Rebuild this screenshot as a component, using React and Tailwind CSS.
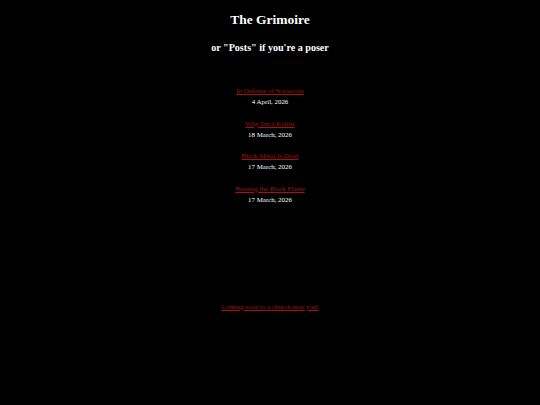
import React from 'react'

const posts = [
  { title: 'In Defense of Norsecore', date: '4 April, 2026' },
  { title: "Why I'm a Kvltist", date: '18 March, 2026' },
  { title: 'Black Metal Is Dead', date: '17 March, 2026' },
  { title: 'Burning the Black Flame', date: '17 March, 2026' },
]

export default function App() {
  return (
    <div
      className="min-h-[405px] w-full bg-black text-white text-center"
      style={{ fontFamily: '"Liberation Serif", "Times New Roman", serif' }}
    >
      <h1 className="pt-[12px] text-[13.5px] leading-[16px] font-bold">The Grimoire</h1>
      <h2 className="mt-[14px] text-[10.1px] leading-[12px] font-bold">
        or "Posts" if you're a poser
      </h2>

      <div className="mt-[31px] flex flex-col gap-[10.5px]">
        {posts.map(post => (
          <div key={post.title} className="text-[6.9px] leading-[11px]">
            <a href="#" className="block text-[#a01414] underline">
              {post.title}
            </a>
            <div>{post.date}</div>
          </div>
        ))}
      </div>

      <div className="mt-[96px] text-[6.9px] leading-[11px]">
        <a href="#" className="text-[#a01414] underline">
          Coming soon to a church near you!
        </a>
      </div>
    </div>
  )
}
